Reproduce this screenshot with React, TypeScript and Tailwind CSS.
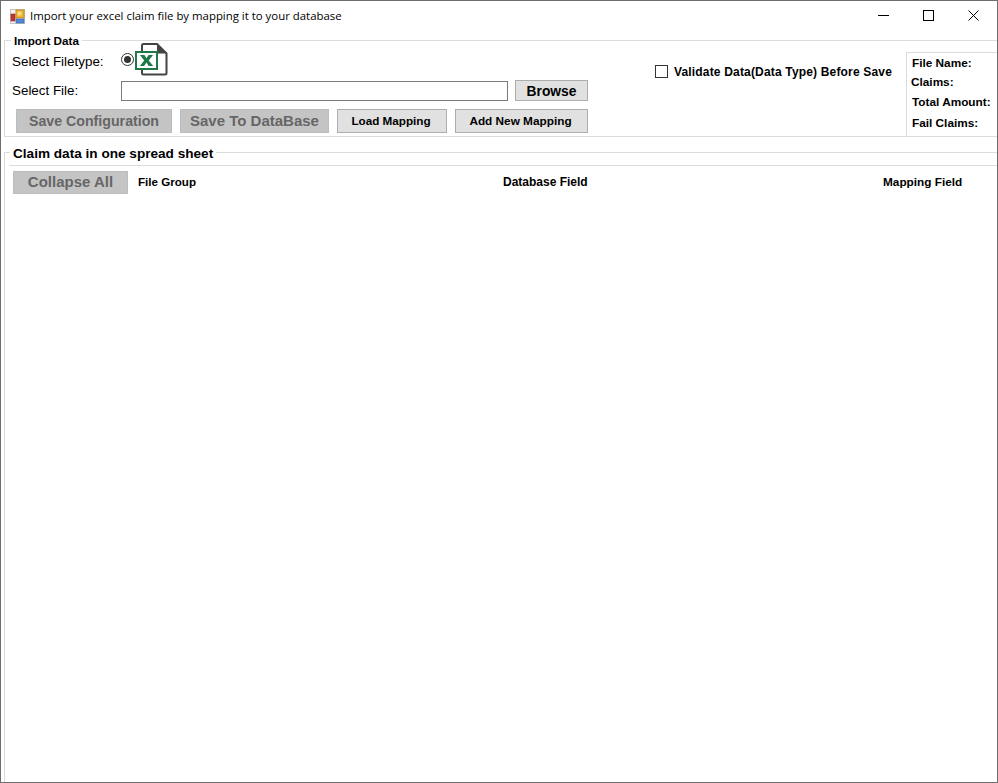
const FORM_FONT = "font-['Liberation_Sans',Arial,sans-serif]";

function AppIcon() {
  return (
    <svg width="15" height="15" viewBox="0 0 15 15" className="shrink-0">
      <rect x="0.5" y="0.5" width="14" height="14" fill="#f2f2f2" stroke="#c4c4c4" />
      <rect x="6" y="1" width="8" height="8" fill="#f2b632" stroke="#b98a2a" />
      <rect x="7.5" y="2.5" width="4" height="4" fill="#f9dc7c" />
      <rect x="1" y="5" width="4" height="7" fill="#c8342c" stroke="#8e2b2b" strokeWidth="0.6" />
      <rect x="6" y="10" width="8" height="4" fill="#4f86d9" stroke="#3668b0" strokeWidth="0.6" />
    </svg>
  );
}

function ExcelIcon() {
  return (
    <svg width="33" height="33" viewBox="0 0 33 33" className="shrink-0">
      <path d="M7 10V2.5a1.5 1.5 0 0 1 1.5-1.5H22L31.5 10.5V30a1.5 1.5 0 0 1-1.5 1.5H8.5A1.5 1.5 0 0 1 7 30V26" fill="#fff" stroke="#444" strokeWidth="2" />
      <path d="M22 1v9.5h9.5z" fill="#444" />
      <rect x="1" y="9" width="21" height="17" fill="#fff" stroke="#1d7a45" strokeWidth="2" />
      <path d="M5 12h4.4l2.1 3.3 2.1-3.3H18l-4.2 5.4 4.4 5.6h-4.5l-2.3-3.4-2.3 3.4H4.8l4.4-5.6z" fill="#1d7a45" />
    </svg>
  );
}

function FormButton({ label, enabled, className }: { label: string; enabled?: boolean; className: string }) {
  return (
    <button
      className={
        enabled
          ? `flex items-center justify-center border border-[#adadad] bg-[#e1e1e1] font-bold whitespace-nowrap text-black ${className}`
          : `flex items-center justify-center border border-[#bdbdbd] bg-[#c4c4c4] font-bold whitespace-nowrap text-[#666666] ${className}`
      }
    >
      {label}
    </button>
  );
}

export default function App() {
  return (
    <div className={`flex h-[783px] w-[998px] flex-col border border-[#6e6e6e] bg-white text-black ${FORM_FONT}`}>
      {/* title bar */}
      <div className="flex h-[39px] shrink-0 items-center pb-[8px] pl-[9px]">
        <AppIcon />
        <span className="mb-[2px] ml-[5px] font-['Open_Sans',sans-serif] text-[11.4px] text-black">
          Import your excel claim file by mapping it to your database
        </span>
        <div className="mb-[2px] ml-auto flex items-center pr-[18px]">
          <svg width="11" height="11" viewBox="0 0 11 11" className="mr-[34px]">
            <path d="M0 5.5h11" stroke="#000" />
          </svg>
          <svg width="11" height="11" viewBox="0 0 11 11" className="mr-[34px]">
            <rect x="0.5" y="0.5" width="10" height="10" fill="none" stroke="#000" />
          </svg>
          <svg width="11" height="11" viewBox="0 0 11 11">
            <path d="M0.5 0.5l10 10M10.5 0.5l-10 10" stroke="#000" />
          </svg>
        </div>
      </div>

      {/* Import Data group */}
      <div className="relative ml-[3px] flex h-[97px] shrink-0 border-t border-b border-l border-[#dcdcdc]">
        <span className="absolute left-[6px] top-[-7px] bg-white px-[3px] text-[11.7px] leading-[13px] font-bold">Import Data</span>
        <div className="flex w-[599px] shrink-0 flex-col pl-[7px]">
          <div className="flex h-[39px] items-center">
            <span className="w-[109px] pt-[4px] text-[13.4px]">Select Filetype:</span>
            <span className="mb-[2px] flex size-[13px] items-center justify-center rounded-full border border-[#333333]">
              <span className="size-[7px] rounded-full bg-[#333333]" />
            </span>
            <span className="mb-[2px] ml-px">
              <ExcelIcon />
            </span>
          </div>
          <div className="flex h-[21px] items-center">
            <span className="w-[109px] pt-[2px] text-[13.4px]">Select File:</span>
            <input className="h-[20px] w-[387px] border border-[#7a7a7a] bg-white" />
            <FormButton label="Browse" enabled className="ml-[7px] h-[21px] w-[73px] pt-[3px] text-[13.8px]" />
          </div>
          <div className="mt-[8px] ml-[4px] flex gap-[8px]">
            <FormButton label="Save Configuration" className="h-[24px] w-[156px] pt-[2px] text-[14.2px]" />
            <FormButton label="Save To DataBase" className="h-[24px] w-[149px] text-[15px]" />
            <FormButton label="Load Mapping" enabled className="h-[24px] w-[110px] pr-[2px] text-[11.7px]" />
            <FormButton label="Add New Mapping" enabled className="h-[24px] w-[133px] pt-[2px] pr-[2px] text-[11.8px]" />
          </div>
        </div>
        <div className="ml-[51px] flex h-[13px] w-[238px] shrink-0 items-center gap-[6px] self-start mt-[24px]">
          <span className="size-[13px] shrink-0 border border-[#333333]" />
          <span className="whitespace-nowrap text-[12px] tracking-[0.17px] font-bold">Validate Data(Data Type) Before Save</span>
        </div>
        <div className="mt-[11px] ml-[13px] flex-1 border-l border-t border-[#dcdcdc] text-[11.8px] font-bold">
          <div className="mt-[4px] ml-[5px] leading-[13px]">File Name:</div>
          <div className="mt-[6px] ml-[4px] leading-[13px]">Claims:</div>
          <div className="mt-[7px] ml-[5px] leading-[13px]">Total Amount:</div>
          <div className="mt-[8px] ml-[5px] leading-[13px]">Fail Claims:</div>
        </div>
      </div>

      {/* Claim data group */}
      <div className="relative mt-[15px] ml-[3px] flex min-h-0 flex-1 flex-col border-t border-l border-[#dcdcdc]">
        <span className="absolute left-[5px] top-[-6px] bg-white px-[3px] text-[13.6px] leading-[13px] font-bold">Claim data in one spread sheet</span>
        <div className="mt-[12px] ml-[4px] flex-1 border-t border-[#dcdcdc]">
          <div className="mt-[5px] ml-[4px] flex items-start">
            <FormButton label="Collapse All" className="h-[23px] w-[115px] text-[15px]" />
            <div className="ml-[10px] mt-[4px] w-[365px] text-[11.6px] leading-[13px] font-bold">File Group</div>
            <div className="mt-[5px] w-[380px] text-[12px] leading-[13px] font-bold">Database Field</div>
            <div className="mt-[5px] text-[11.8px] leading-[13px] font-bold">Mapping Field</div>
          </div>
        </div>
      </div>
    </div>
  );
}
